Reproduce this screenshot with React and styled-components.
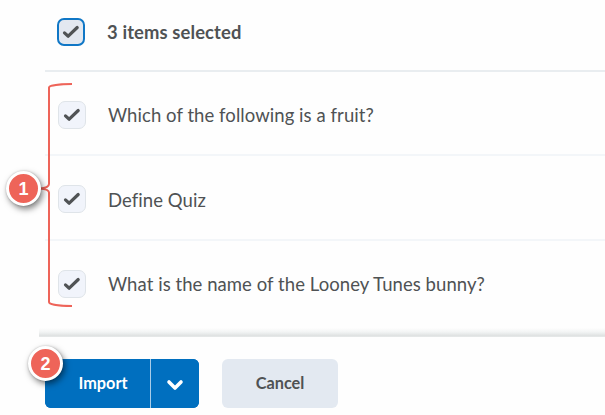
import React from 'react';
import styled, { createGlobalStyle } from 'styled-components';

const GlobalStyle = createGlobalStyle`
  * { box-sizing: border-box; }
  body { margin: 0; background: #fefefe; overflow: hidden; }
`;

const Page = styled.main`
  position: relative;
  width: 605px;
  height: 415px;
  display: flex;
  flex-direction: column;
  background: #fefefe;
  color: #4f5254;
  font-family: Lato, sans-serif;
`;

const Header = styled.header`
  display: flex;
  align-items: center;
  height: 72px;
  margin-left: 45px;
  padding: 0 0 6px 12px;
  border-bottom: 2px solid #e9edf0;
`;

const List = styled.ul`
  list-style: none;
  margin: 0 0 0 45px;
  padding: 0;
  height: 256px;
`;

const Row = styled.li`
  display: flex;
  align-items: center;
  height: ${(p) => (p.$first ? 84 : 85)}px;
  padding: ${(p) => (p.$first ? '3px' : p.$last ? '1px' : '3px')} 0 0 13px;
  border-bottom: ${(p) => (p.$last ? 'none' : '2px solid #f3f6f9')};
`;

const Box = styled.span`
  display: flex;
  flex: none;
  align-items: center;
  justify-content: center;
  width: 28px;
  height: 28px;
  border-radius: 7px;
  border: ${(p) => (p.$focused ? '2px solid #1077c6' : '1px solid #dfe4e9')};
  background: ${(p) => (p.$focused ? '#e3e8f0' : '#f1f4fb')};
`;

const Title = styled.span`
  margin-left: 22px;
  font-size: 18.4px;
  font-weight: 700;
  line-height: 24px;
  letter-spacing: 0.12px;
  white-space: nowrap;
`;

const Label = styled.span`
  margin-left: 22px;
  padding-top: ${(p) => (p.$lowered ? 1 : 0)}px;
  font-size: 18.5px;
  line-height: 24px;
  letter-spacing: 0.06px;
  white-space: nowrap;
`;

const FooterShade = styled.div`
  height: 9px;
  margin-left: 39px;
  background: linear-gradient(#fefefe, #f2f4f4 45%, #dfe2e2 85%, #e8eaea);
`;

const Footer = styled.footer`
  display: flex;
  gap: 23px;
  padding: 22px 0 0 45px;
`;

const Split = styled.div`
  display: flex;
  width: 154px;
  height: 49px;
  border-radius: 6px;
  overflow: hidden;
  background: #006fbf;
`;

const Button = styled.button`
  border: 0;
  padding: 0 0 2px ${(p) => p.$inset || 0}px;
  height: 49px;
  width: ${(p) => p.$width}px;
  border-radius: ${(p) => (p.$primary ? 0 : 6)}px;
  background: ${(p) => (p.$primary ? '#006fbf' : '#e3e9f1')};
  color: ${(p) => (p.$primary ? '#fff' : '#4f5254')};
  font: 700 16.3px/20px Lato, sans-serif;
`;

const Caret = styled(Button)`
  display: flex;
  align-items: center;
  justify-content: center;
  padding: 2px 0 0;
  border-left: 1px solid #a8cce8;
`;

const Badge = styled.span`
  position: absolute;
  left: ${(p) => p.$x}px;
  top: ${(p) => p.$y}px;
  display: flex;
  align-items: center;
  justify-content: center;
  width: 35px;
  height: 35px;
  border: 3px solid #fff;
  border-radius: 50%;
  background: #ee6459;
  color: #fff;
  font: 700 18px/20px 'Liberation Sans', sans-serif;
  box-shadow: 2px 3px 6px rgba(0, 0, 0, 0.5), 0 0 2px rgba(0, 0, 0, 0.2);
`;

const Bracket = styled.svg`
  position: absolute;
  left: 38px;
  top: 80px;
`;

const Check = () => (
  <svg width="18" height="16" viewBox="0 0 18 16" fill="none" stroke="#505355" strokeWidth="3.2" strokeLinecap="round" strokeLinejoin="round">
    <path d="M2.5 8.9 6.2 12.2 15.2 3.5" />
  </svg>
);

const questions = [
  'Which of the following is a fruit?',
  'Define Quiz',
  'What is the name of the Looney Tunes bunny?',
];

export default function App() {
  return (
    <Page>
      <GlobalStyle />
      <Header>
        <Box $focused><Check /></Box>
        <Title>3 items selected</Title>
      </Header>
      <List>
        {questions.map((q, i) => (
          <Row key={q} $first={i === 0} $last={i === questions.length - 1}>
            <Box><Check /></Box>
            <Label $lowered={i === 1}>{q}</Label>
          </Row>
        ))}
      </List>
      <FooterShade />
      <Footer>
        <Split>
          <Button $primary $width={105} $inset={11}>Import</Button>
          <Caret $primary $width={49} aria-label="More import options">
            <svg width="18" height="12" viewBox="0 0 18 12" fill="none" stroke="#fff" strokeWidth="3.6" strokeLinecap="round" strokeLinejoin="round">
              <path d="M3 3 9 9 15 3" />
            </svg>
          </Caret>
        </Split>
        <Button $width={116}>Cancel</Button>
      </Footer>
      <Bracket width="38" height="230" viewBox="38 80 38 230" fill="none" stroke="#ee6459" strokeWidth="2">
        <path d="M72 84C60 84 49 85.5 49 87.5V184C49 186.5 45 188 40 188.4C45 188.8 49 190 49 192.5V302C49 304.5 60 306 72 306" />
      </Bracket>
      <Badge $x={6} $y={171}>1</Badge>
      <Badge $x={28} $y={346}>2</Badge>
    </Page>
  );
}
